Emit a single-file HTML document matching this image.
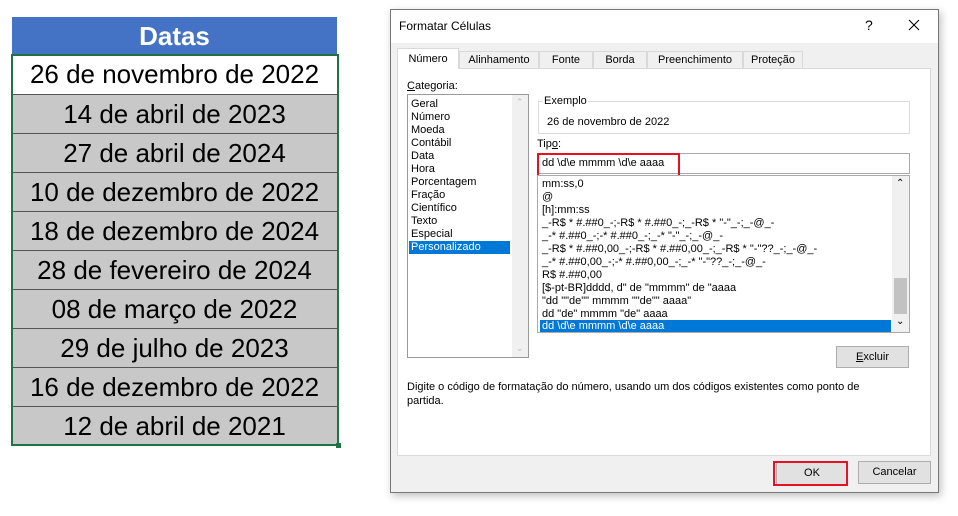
<!DOCTYPE html>
<html><head><meta charset="utf-8"><style>
*{box-sizing:border-box;margin:0;padding:0}
body{width:958px;height:516px;background:#fff;position:relative;overflow:hidden;font-family:"Liberation Sans",sans-serif;}
.a{position:absolute}
.cell{position:absolute;left:12px;width:325px;height:39px;border-top:1px solid #555;text-align:center;font-size:26px;line-height:38px;color:#000;background:#c8c8c8}
.d{font-size:11px;color:#000}
.li{position:absolute;left:0;height:13px;line-height:13px;white-space:nowrap;font-size:11px}
</style></head><body>
<!-- table -->
<div class="a" style="left:12px;top:17px;width:325px;height:38px;background:#4472c4;color:#fff;font-weight:bold;font-size:26px;text-align:center;line-height:38px">Datas</div>
<div class="cell" style="top:55px;background:#fff;border-top:none">26 de novembro de 2022</div>
<div class="cell" style="top:94px">14 de abril de 2023</div>
<div class="cell" style="top:133px">27 de abril de 2024</div>
<div class="cell" style="top:172px">10 de dezembro de 2022</div>
<div class="cell" style="top:211px">18 de dezembro de 2024</div>
<div class="cell" style="top:250px">28 de fevereiro de 2024</div>
<div class="cell" style="top:289px">08 de março de 2022</div>
<div class="cell" style="top:328px">29 de julho de 2023</div>
<div class="cell" style="top:367px">16 de dezembro de 2022</div>
<div class="cell" style="top:406px">12 de abril de 2021</div>
<div class="a" style="left:11px;top:54px;width:328px;height:392px;border:2px solid #217346"></div>
<div class="a" style="left:336px;top:443px;width:5px;height:5px;background:#217346"></div>

<!-- dialog -->
<div class="a" style="left:390px;top:9px;width:549px;height:484px;background:#f0f0f0;border:1px solid #777;box-shadow:2px 3px 8px rgba(0,0,0,.25)">
 <div class="a" style="left:0;top:0;width:547px;height:33px;background:#fff"></div>
 <div class="a d" style="left:8px;top:9px;font-size:12px">Formatar Células</div>
 <div class="a" style="left:474px;top:7px;font-size:14px">?</div>
 <svg class="a" style="left:517px;top:9px" width="12" height="12" viewBox="0 0 12 12"><path d="M1 1L11 11M11 1L1 11" stroke="#000" stroke-width="1.1" fill="none"/></svg>
 <!-- tab panel -->
 <div class="a" style="left:6px;top:58px;width:534px;height:388px;background:#fff;border:1px solid #d9d9d9"></div>
 <div class="a d" style="left:6px;top:38px;width:62px;height:21px;background:#fff;border:1px solid #d9d9d9;border-bottom:none;text-align:center;line-height:20px">Número</div>
 <div class="a d" style="left:68px;top:41px;width:80px;height:18px;border:1px solid #d9d9d9;text-align:center;line-height:17px">Alinhamento</div>
 <div class="a d" style="left:148px;top:41px;width:54px;height:18px;border:1px solid #d9d9d9;text-align:center;line-height:17px">Fonte</div>
 <div class="a d" style="left:202px;top:41px;width:54px;height:18px;border:1px solid #d9d9d9;text-align:center;line-height:17px">Borda</div>
 <div class="a d" style="left:256px;top:41px;width:96px;height:18px;border:1px solid #d9d9d9;text-align:center;line-height:17px">Preenchimento</div>
 <div class="a d" style="left:352px;top:41px;width:60px;height:18px;border:1px solid #d9d9d9;text-align:center;line-height:17px">Proteção</div>
 <div class="a d" style="left:16px;top:70px"><u>C</u>ategoria:</div>
 <!-- category list -->
 <div class="a" style="left:16px;top:84px;width:122px;height:264px;border:1px solid #999;background:#fff">
  <div class="a" style="left:104px;top:0;width:16px;height:262px;background:#f0f0f0"></div>
  <div class="a d" style="left:108px;top:2px;color:#bbb;font-size:9px">⌃</div>
  <div class="a d" style="left:108px;top:248px;color:#bbb;font-size:9px">⌄</div>
  <div class="li" style="left:3px;top:3px">Geral</div>
  <div class="li" style="left:3px;top:16px">Número</div>
  <div class="li" style="left:3px;top:29px">Moeda</div>
  <div class="li" style="left:3px;top:42px">Contábil</div>
  <div class="li" style="left:3px;top:55px">Data</div>
  <div class="li" style="left:3px;top:68px">Hora</div>
  <div class="li" style="left:3px;top:81px">Porcentagem</div>
  <div class="li" style="left:3px;top:94px">Fração</div>
  <div class="li" style="left:3px;top:107px">Científico</div>
  <div class="li" style="left:3px;top:120px">Texto</div>
  <div class="li" style="left:3px;top:133px">Especial</div>
  <div class="li" style="left:1px;top:146px;width:101px;background:#0078d7;color:#fff;padding-left:2px">Personalizado</div>
 </div>
 <!-- exemplo -->
 <div class="a" style="left:147px;top:91px;width:372px;height:33px;border:1px solid #dcdcdc"></div>
 <div class="a d" style="left:152px;top:85px;background:#fff;padding:0 1px">Exemplo</div>
 <div class="a d" style="left:156px;top:106px">26 de novembro de 2022</div>
 <div class="a d" style="left:146px;top:128px">Tip<u>o</u>:</div>
 <div class="a" style="left:146px;top:143px;width:373px;height:21px;border:1px solid #aaa;background:#fff"></div>
 <div class="a d" style="left:151px;top:147px">dd \d\e mmmm \d\e aaaa</div>
 <div class="a" style="left:146px;top:143px;width:143px;height:24px;border:2px solid #e81123"></div>
 <!-- type list -->
 <div class="a" style="left:146px;top:165px;width:373px;height:158px;border:1px solid #aaa;background:#fff;overflow:hidden">
  <div class="a" style="left:354px;top:0;width:17px;height:156px;background:#f0f0f0"></div>
  <div class="a" style="left:356px;top:102px;width:13px;height:36px;background:#c2c2c2"></div>
  <div class="a d" style="left:358px;top:2px;font-size:10px">⌃</div>
  <div class="a d" style="left:358px;top:140px;font-size:10px">⌄</div>
  <div class="li" style="left:4px;top:2px">mm:ss,0</div>
  <div class="li" style="left:4px;top:15px">@</div>
  <div class="li" style="left:4px;top:28px">[h]:mm:ss</div>
  <div class="li" style="left:4px;top:41px">_-R$ * #.##0_-;-R$ * #.##0_-;_-R$ * "-"_-;_-@_-</div>
  <div class="li" style="left:4px;top:54px">_-* #.##0_-;-* #.##0_-;_-* "-"_-;_-@_-</div>
  <div class="li" style="left:4px;top:67px">_-R$ * #.##0,00_-;-R$ * #.##0,00_-;_-R$ * "-"??_-;_-@_-</div>
  <div class="li" style="left:4px;top:80px">_-* #.##0,00_-;-* #.##0,00_-;_-* "-"??_-;_-@_-</div>
  <div class="li" style="left:4px;top:93px">R$ #.##0,00</div>
  <div class="li" style="left:4px;top:106px">[$-pt-BR]dddd, d" de "mmmm" de "aaaa</div>
  <div class="li" style="left:4px;top:119px">"dd ""de"" mmmm ""de"" aaaa"</div>
  <div class="li" style="left:4px;top:132px">dd "de" mmmm "de" aaaa</div>
  <div class="li" style="left:2px;top:144px;width:351px;background:#0078d7;color:#fff;padding-left:2px">dd \d\e mmmm \d\e aaaa</div>
 </div>
 <div class="a d" style="left:445px;top:336px;width:73px;height:22px;background:#e1e1e1;border:1px solid #adadad;text-align:center;line-height:20px"><u>E</u>xcluir</div>
 <div class="a d" style="left:16px;top:370px;line-height:14px">Digite o código de formatação do número, usando um dos códigos existentes como ponto de<br>partida.</div>
 <div class="a d" style="left:385px;top:452px;width:72px;height:23px;background:#e1e1e1;border:1px solid #adadad;text-align:center;line-height:21px">OK</div>
 <div class="a" style="left:382px;top:451px;width:75px;height:25px;border:2px solid #e81123"></div>
 <div class="a d" style="left:467px;top:451px;width:73px;height:23px;background:#e1e1e1;border:1px solid #adadad;text-align:center;line-height:21px">Cancelar</div>
</div>
</body></html>
